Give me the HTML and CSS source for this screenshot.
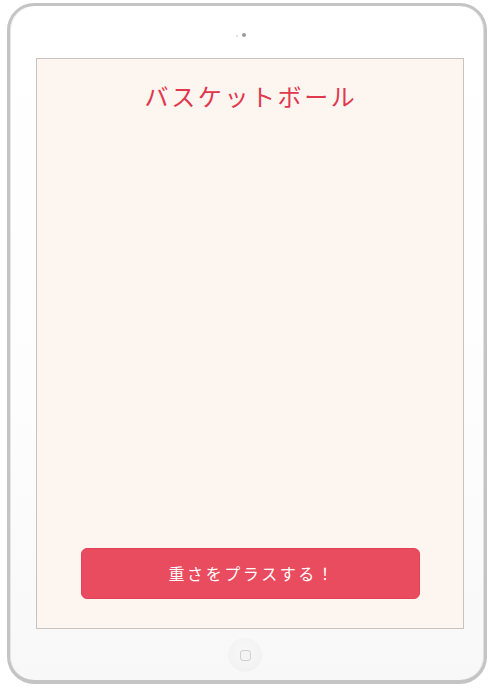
FILE: index.html
```html
<!DOCTYPE html>
<html lang="ja">
<head>
<meta charset="utf-8">
<link rel="stylesheet" href="styles.css">
</head>
<body>
<div class="device">
  <div class="top-bezel">
    <span class="sensor"></span>
    <span class="camera"></span>
  </div>
  <div class="screen">
    <h1 class="title">バスケットボール</h1>
    <button class="add-btn">重さをプラスする！</button>
  </div>
  <div class="bottom-bezel">
    <div class="home"><span class="home-square"></span></div>
  </div>
</div>
</body>
</html>
```
FILE: styles.css
```css
* { box-sizing: border-box; }
html, body { margin: 0; padding: 0; background: #fff; }
body { width: 500px; height: 688px; overflow: hidden; font-family: "Noto Sans CJK JP", "Noto Sans", sans-serif; }

.device {
  margin: 3px 0 0 7px;
  width: 480px;
  height: 681px;
  border: 3px solid #c4c4c4;
  border-bottom-width: 4px;
  border-radius: 27px;
  background: linear-gradient(#ffffff 0%, #fdfdfd 60%, #f8f8f8 100%);
  box-shadow: inset 1px 0 0 #e6e6e6, inset -1px 0 0 #e0e0e0;
  display: flex;
  flex-direction: column;
  padding-left: 26px;
}

.top-bezel {
  height: 52px;
  display: flex;
  justify-content: center;
  align-items: flex-start;
  padding-top: 27px;
  padding-right: 38px;
  gap: 4px;
}
.sensor { width: 2px; height: 2px; border-radius: 50%; background: #d8d8d8; margin-top: 2px; }
.camera { width: 4px; height: 4px; border-radius: 50%; background: #9a9a9a; }

.screen {
  width: 428px;
  height: 571px;
  border: 1px solid #c9c2bd;
  background: #fdf5f0;
  display: flex;
  flex-direction: column;
  align-items: center;
}

.title {
  margin: 21px 0 0 0;
  font-size: 24px;
  line-height: 32px;
  font-weight: 400;
  letter-spacing: 2.6px;
  color: #e0384d;
  padding-left: 2px;
}

.add-btn {
  margin: auto 0 29px 0;
  width: 339px;
  height: 51px;
  border: 1px solid #e24257;
  border-radius: 6px;
  background: #e94c5f;
  color: #fff;
  font-family: "Noto Sans CJK JP", "Noto Sans", sans-serif;
  font-size: 16px;
  line-height: 20px;
  letter-spacing: 2.6px;
  padding: 0 0 2px 4px;
}

.bottom-bezel {
  flex: 1;
  display: flex;
  justify-content: center;
  align-items: flex-start;
  padding-top: 9px;
  padding-right: 30px;
}
.home {
  width: 34px;
  height: 34px;
  border-radius: 50%;
  background: radial-gradient(circle at 50% 40%, #f8f8f8, #f2f2f2 70%, #f6f6f6);
  display: flex;
  align-items: center;
  justify-content: center;
}
.home-square {
  width: 11px;
  height: 11px;
  border: 1px solid #cfcfcf;
  border-radius: 3px;
  background: #f4f4f4;
}
```
